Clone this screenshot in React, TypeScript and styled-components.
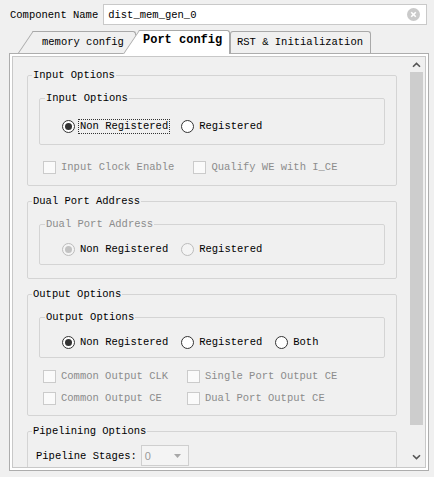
import React from 'react'
import styled, { createGlobalStyle, css } from 'styled-components'

const GlobalStyle = createGlobalStyle`
  html, body {
    margin: 0;
    padding: 0;
    background: #f0f0f0;
  }
  body {
    font-family: 'Liberation Mono', 'DejaVu Sans Mono', monospace;
    font-size: 10.5px;
    color: #000;
  }
`

const Window = styled.div`
  width: 434px;
  height: 477px;
  overflow: hidden;
  background: #f0f0f0;
  padding-top: 4px;
  box-sizing: border-box;
`

const NameRow = styled.div`
  display: flex;
  align-items: center;
  gap: 5px;
  height: 21px;
  margin: 0 7px 0 10px;
`

const NameLabel = styled.span`
  white-space: nowrap;
`

const NameInput = styled.div`
  flex: 1;
  height: 21px;
  box-sizing: border-box;
  border: 1px solid #c9c9c9;
  background: #fff;
  display: flex;
  align-items: center;
  padding: 0 6px 0 4px;
`

const NameValue = styled.span`
  flex: 1;
`

const TabStrip = styled.div`
  display: flex;
  align-items: flex-end;
  height: 23px;
  margin-top: 5px;
  padding-left: 18px;
  position: relative;
  z-index: 2;
`

const Tab = styled.div<{ $active?: boolean; $slanted?: boolean; $w: number; $pad: number }>`
  position: relative;
  z-index: ${(p) => (p.$active ? 3 : 1)};
  width: ${(p) => p.$w}px;
  height: ${(p) => (p.$active ? 24 : 22)}px;
  margin-bottom: ${(p) => (p.$active ? -1 : 0)}px;
  box-sizing: border-box;
  padding-left: ${(p) => p.$pad}px;
  padding-top: ${(p) => (p.$active ? 3 : 4)}px;
  font-size: ${(p) => (p.$active ? '12px' : '10.5px')};
  font-weight: ${(p) => (p.$active ? 'bold' : 'normal')};
  white-space: nowrap;
  line-height: 14px;

  &::before,
  &::after {
    content: '';
    position: absolute;
    top: 0;
    bottom: 0;
    z-index: -1;
    background: ${(p) => (p.$active ? '#fff' : '#f0f0f0')};
    border-top: 1px solid #a9a9a9;
  }

  ${(p) =>
    p.$slanted
      ? css`
          &::before {
            left: 0;
            width: 40px;
            border-left: 1px solid #a9a9a9;
            transform: skewX(-34deg);
            transform-origin: bottom left;
          }
          &::after {
            left: 22px;
            right: 0;
            border-right: 1px solid #a9a9a9;
            border-top-right-radius: 3px;
          }
        `
      : css`
          &::before {
            left: 0;
            right: 0;
            border-left: 1px solid #a9a9a9;
            border-right: 1px solid #a9a9a9;
            border-radius: 3px 3px 0 0;
          }
          &::after {
            display: none;
          }
        `}
`

const Panel = styled.div`
  margin: 0 5px 0 9px;
  height: 418px;
  box-sizing: border-box;
  border: 1px solid #adadad;
  background: #fff;
  padding: 2px;
`

const PanelInner = styled.div`
  height: 100%;
  box-sizing: border-box;
  border: 1px solid #c8c8c8;
  background: #f0f0f0;
  display: flex;
  overflow: hidden;
`

const ScrollBody = styled.div`
  flex: 1;
  padding: 11px 11px 0 14px;
  display: flex;
  flex-direction: column;
  gap: 8px;
  overflow: hidden;
`

const Scrollbar = styled.div`
  width: 17px;
  display: flex;
  flex-direction: column;
  align-items: center;
`

const ScrollArrow = styled.div<{ $h: number }>`
  height: ${(p) => p.$h}px;
  width: 100%;
  display: flex;
  align-items: center;
  justify-content: center;
`

const Track = styled.div`
  flex: 1;
  width: 100%;
  box-sizing: border-box;
  padding: 0 2px;
`

const Thumb = styled.div`
  height: 353px;
  background: #cdcdcd;
`

const Group = styled.fieldset<{ $pb?: number; $pt?: number }>`
  margin: 0;
  min-width: 0;
  border: 1px solid #d4d4d4;
  border-radius: 2px;
  padding: ${(p) => p.$pt ?? 9}px 11px ${(p) => p.$pb ?? 10}px 11px;
`

const InnerGroup = styled.fieldset<{ $tall?: boolean }>`
  margin: 0;
  min-width: 0;
  border: 1px solid #d4d4d4;
  border-radius: 2px;
  padding: ${(p) => (p.$tall ? '13px 10px 10px 22px' : '10px 10px 7px 22px')};
`

const Legend = styled.legend<{ $inner?: boolean; $disabled?: boolean }>`
  padding: 0 1px;
  margin-left: ${(p) => (p.$inner ? -17 : -7)}px;
  line-height: 14px;
  color: ${(p) => (p.$disabled ? '#8c8c8c' : '#000')};
`

const RadioRow = styled.div`
  display: flex;
  align-items: center;
  gap: 12px;
  height: 16px;
`

const RadioItem = styled.label`
  display: flex;
  align-items: center;
  gap: 4px;
  white-space: nowrap;
`

const RadioCircle = styled.span<{ $checked?: boolean; $disabled?: boolean }>`
  width: 13px;
  height: 13px;
  box-sizing: border-box;
  border-radius: 50%;
  border: 1px solid ${(p) => (p.$disabled ? '#bcbcbc' : '#333')};
  background: ${(p) => (p.$disabled ? '#f4f4f4' : '#fff')};
  display: flex;
  align-items: center;
  justify-content: center;
  flex-shrink: 0;

  &::after {
    content: '';
    display: ${(p) => (p.$checked ? 'block' : 'none')};
    width: 7px;
    height: 7px;
    border-radius: 50%;
    background: ${(p) => (p.$disabled ? '#c2c2c2' : '#333')};
  }
`

const RadioText = styled.span<{ $focus?: boolean }>`
  padding: 0 1px;
  line-height: 13px;
  outline: ${(p) => (p.$focus ? '1px dotted #333' : 'none')};
`

const CheckRow = styled.div<{ $mt: number }>`
  display: flex;
  align-items: center;
  gap: 19px;
  height: 14px;
  margin: ${(p) => p.$mt}px 0 0 4px;
`

const CheckItem = styled.label<{ $w?: number }>`
  display: flex;
  align-items: center;
  gap: 5px;
  width: ${(p) => (p.$w ? `${p.$w}px` : 'auto')};
  color: #8c8c8c;
  white-space: nowrap;
`

const CheckBox = styled.span`
  width: 13px;
  height: 13px;
  box-sizing: border-box;
  border: 1px solid #cbcbcb;
  background: #fafafa;
  flex-shrink: 0;
`

const StageRow = styled.div`
  display: flex;
  align-items: center;
  gap: 4px;
  margin-left: -3px;
`

const Select = styled.div`
  width: 48px;
  height: 21px;
  box-sizing: border-box;
  border: 1px solid #cfcfcf;
  background: #f4f4f4;
  color: #9a9a9a;
  display: flex;
  align-items: center;
  justify-content: space-between;
  padding: 0 7px 0 3px;
  font-family: 'Liberation Sans', Arial, sans-serif;
  font-size: 11px;
`

const Chevron = ({ down }: { down?: boolean }) => (
  <svg width="9" height="6" viewBox="0 0 9 6">
    <path
      d={down ? 'M1 1.2 L4.5 4.6 L8 1.2' : 'M1 4.8 L4.5 1.4 L8 4.8'}
      fill="none"
      stroke="#555"
      strokeWidth="1.6"
    />
  </svg>
)

const ClearIcon = () => (
  <svg width="13" height="13" viewBox="0 0 13 13">
    <circle cx="6.5" cy="6.5" r="6.5" fill="#cacaca" />
    <path d="M4.2 4.2 L8.8 8.8 M8.8 4.2 L4.2 8.8" stroke="#fff" strokeWidth="1.6" />
  </svg>
)

function Radio({
  label,
  checked,
  disabled,
  focus,
}: {
  label: string
  checked?: boolean
  disabled?: boolean
  focus?: boolean
}) {
  return (
    <RadioItem>
      <RadioCircle $checked={checked} $disabled={disabled} />
      <RadioText $focus={focus}>{label}</RadioText>
    </RadioItem>
  )
}

function Check({ label, w }: { label: string; w?: number }) {
  return (
    <CheckItem $w={w}>
      <CheckBox />
      {label}
    </CheckItem>
  )
}

export default function App() {
  return (
    <Window>
      <GlobalStyle />
      <NameRow>
        <NameLabel>Component Name</NameLabel>
        <NameInput>
          <NameValue>dist_mem_gen_0</NameValue>
          <ClearIcon />
        </NameInput>
      </NameRow>

      <TabStrip>
        <Tab $slanted $w={118} $pad={24}>
          memory config
        </Tab>
        <Tab $slanted $active $w={107} $pad={20} style={{ marginLeft: -13 }}>
          Port config
        </Tab>
        <Tab $w={141} $pad={7}>
          RST &amp; Initialization
        </Tab>
      </TabStrip>

      <Panel>
        <PanelInner>
          <ScrollBody>
            <Group $pb={11}>
              <Legend>Input Options</Legend>
              <InnerGroup $tall>
                <Legend $inner>Input Options</Legend>
                <RadioRow>
                  <Radio label="Non Registered" checked focus />
                  <Radio label="Registered" />
                </RadioRow>
              </InnerGroup>
              <CheckRow $mt={15}>
                <Check label="Input Clock Enable" />
                <Check label="Qualify WE with I_CE" />
              </CheckRow>
            </Group>

            <Group $pb={13}>
              <Legend>Dual Port Address</Legend>
              <InnerGroup>
                <Legend $inner $disabled>
                  Dual Port Address
                </Legend>
                <RadioRow>
                  <Radio label="Non Registered" checked disabled />
                  <Radio label="Registered" disabled />
                </RadioRow>
              </InnerGroup>
            </Group>

            <Group>
              <Legend>Output Options</Legend>
              <InnerGroup>
                <Legend $inner>Output Options</Legend>
                <RadioRow>
                  <Radio label="Non Registered" checked />
                  <Radio label="Registered" />
                  <Radio label="Both" />
                </RadioRow>
              </InnerGroup>
              <CheckRow $mt={11}>
                <Check label="Common Output CLK" w={125} />
                <Check label="Single Port Output CE" />
              </CheckRow>
              <CheckRow $mt={8}>
                <Check label="Common Output CE" w={125} />
                <Check label="Dual Port Output CE" />
              </CheckRow>
            </Group>

            <Group $pt={7}>
              <Legend>Pipelining Options</Legend>
              <StageRow>
                <span>Pipeline Stages:</span>
                <Select>
                  <span>0</span>
                  <svg width="7" height="4" viewBox="0 0 7 4">
                    <path d="M0 0 L7 0 L3.5 4 Z" fill="#a8a8a8" />
                  </svg>
                </Select>
              </StageRow>
            </Group>
          </ScrollBody>

          <Scrollbar>
            <ScrollArrow $h={15}>
              <Chevron />
            </ScrollArrow>
            <Track>
              <Thumb />
            </Track>
            <ScrollArrow $h={20}>
              <Chevron down />
            </ScrollArrow>
          </Scrollbar>
        </PanelInner>
      </Panel>
    </Window>
  )
}
